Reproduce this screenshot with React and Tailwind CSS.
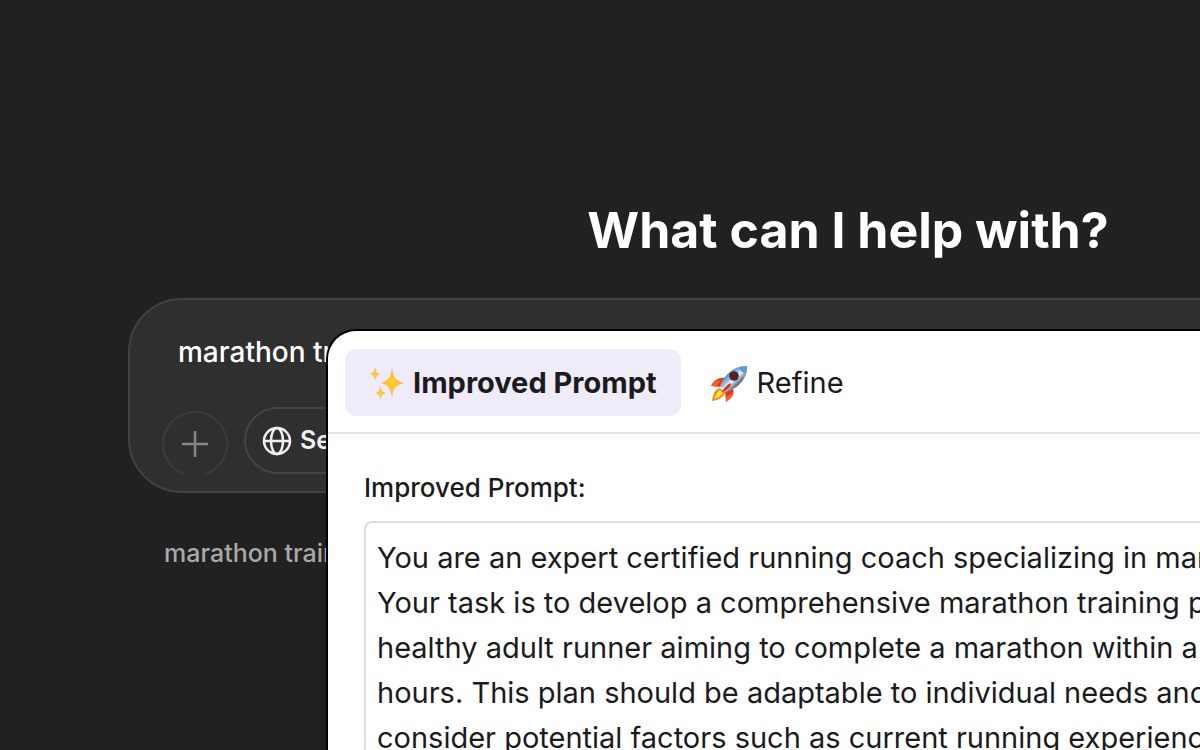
import { useState } from "react";

const IMPROVED_PROMPT = [
  "You are an expert certified running coach specializing in marathon training.",
  "Your task is to develop a comprehensive marathon training plan for a",
  "healthy adult runner aiming to complete a marathon within a target of four",
  "hours. This plan should be adaptable to individual needs and",
  "consider potential factors such as current running experience,",
].join("\n");

function SparklesIcon() {
  return (
    <svg viewBox="0 0 36 36" className="size-9" aria-hidden="true">
      <defs>
        <radialGradient id="spark">
          <stop offset="0" stopColor="#fcd21c" />
          <stop offset="0.45" stopColor="#fac53c" />
          <stop offset="1" stopColor="#f2b48a" />
        </radialGradient>
      </defs>
      <g fill="url(#spark)">
        <path d="M23 2c1.200 10 3 13.500 12 16-9 2.500-10.800 5.500-12 15-1.200-9.500-3-12.500-11-15 8-2.500 9.800-6 11-16z" />
        <path d="M6 2c.8 4.500 1.700 6 5 7-3.300 1-4.200 2.500-5 7-.8-4.500-1.700-6-5-7 3.300-1 4.200-2.500 5-7z" />
        <path d="M11.500 21c.8 4.500 1.700 6 5 7-3.300 1-4.200 2.500-5 7-.8-4.500-1.700-6-5-7 3.300-1 4.200-2.500 5-7z" />
      </g>
    </svg>
  );
}

function RocketIcon() {
  return (
    <svg viewBox="0 0 40 40" className="size-10" aria-hidden="true">
      <defs>
        <linearGradient id="hull" x1="0.25" y1="0.25" x2="0.75" y2="0.75">
          <stop offset="0" stopColor="#3f7fb5" />
          <stop offset="0.35" stopColor="#8fbfe0" />
          <stop offset="0.52" stopColor="#f1f7fa" />
          <stop offset="0.72" stopColor="#93a9b8" />
          <stop offset="1" stopColor="#2b4257" />
        </linearGradient>
      </defs>
      <path d="M17 15C10 14 5 17 2 23l10 1zM24 26c2 5-1 9-7 13l-1-11z" fill="#e23a1b" />
      <path d="M12 17c-4 0-7 2-10 6l5 .500zM24 30c0 4-3 6-7 9l0-5z" fill="#f4691f" />
      <path d="M11 25c-5 1-7 6-8 13 7-1 12-4 13-9z" fill="#f28a1c" />
      <path d="M11 27c-3 2-5 6-6 9 4-1 7-3 9-6z" fill="#ffe53f" />
      <path d="M38 3C27 2 16 10 11 23l6 6C30 25 39 14 38 3z" fill="url(#hull)" />
      <path d="M38 3c-3-.200-6 .300-9 1.500 2 3 4 5 8 6.500.9-3 1.100-5.500 1-8z" fill="#5a9ed0" />
      <circle cx="25" cy="13" r="4.800" fill="#30323b" />
      <circle cx="25" cy="13" r="3" fill="#7d1219" />
      <path d="M21 20c-4 3-7 6-8 9 4-1 7-4 9-7z" fill="#de2b1e" />
    </svg>
  );
}

function GlobeIcon() {
  return (
    <svg
      viewBox="0 0 30 30"
      className="size-[30px]"
      fill="none"
      stroke="currentColor"
      strokeWidth="2.500"
      aria-hidden="true"
    >
      <circle cx="15" cy="15" r="13" />
      <ellipse cx="15" cy="15" rx="6" ry="13" />
      <path d="M2 15h26" />
    </svg>
  );
}

function Composer() {
  return (
    <form className="rounded-[54px] border-2 border-[#424242] bg-[#2f2f2f] px-8 pt-8 pb-[17px]">
      <input
        type="text"
        aria-label="Message"
        defaultValue="marathon training plan"
        className="block h-10 w-full bg-transparent px-4 text-[28px] font-medium text-white outline-none"
      />
      <div className="mt-[35px] flex h-[67px] gap-4 overflow-hidden">
        <div className="pt-1">
          <button
            type="button"
            aria-label="Attach"
            className="flex size-[66px] items-center justify-center rounded-full border-2 border-[#3c3c3c] text-[#858585]"
          >
            <svg
              viewBox="0 0 26 26"
              className="size-[26px]"
              stroke="currentColor"
              strokeWidth="2.500"
              aria-hidden="true"
            >
              <path d="M13 0v26M0 13h26" />
            </svg>
          </button>
        </div>
        <button
          type="button"
          className="flex items-center gap-2 rounded-full border-2 border-[#454545] px-4 text-[25px] font-semibold text-[#f0f0f0]"
        >
          <GlobeIcon />
          Search
        </button>
      </div>
    </form>
  );
}

function PromptPanel() {
  const [activeTab, setActiveTab] = useState("improved");

  return (
    <section className="absolute top-[331px] -right-80 bottom-0 left-[328px] flex flex-col rounded-tl-[28px] bg-white text-[#1b1b1d] ring-2 ring-black">
      {/* Tabs */}
      <div className="flex gap-2 border-b-2 border-[#e4e4e4] px-[17px] pt-[18px] pb-4">
        <button
          type="button"
          onClick={() => setActiveTab("improved")}
          className={`flex h-[67px] items-center gap-2 rounded-xl px-6 text-[29px] ${
            activeTab === "improved" ? "bg-[#efebf8] font-bold" : ""
          }`}
        >
          <SparklesIcon />
          Improved Prompt
        </button>
        <button
          type="button"
          onClick={() => setActiveTab("refine")}
          className={`flex h-[67px] items-center gap-2 rounded-xl px-5 text-[29px] ${
            activeTab === "refine" ? "bg-[#efebf8] font-bold" : ""
          }`}
        >
          <RocketIcon />
          Refine
        </button>
      </div>

      {/* Prompt text */}
      <div className="flex flex-1 flex-col px-9 pt-9">
        <label htmlFor="improved" className="text-[26px] leading-9 font-medium">
          Improved Prompt:
        </label>
        <textarea
          id="improved"
          defaultValue={IMPROVED_PROMPT}
          className="mt-[15px] w-full flex-1 resize-none overflow-hidden rounded-t-lg border-2 border-b-0 border-[#dedede] px-[11px] pt-3 text-[29px] leading-[45px] whitespace-pre outline-none"
        />
      </div>
    </section>
  );
}

export default function App() {
  return (
    <div className="relative h-screen overflow-hidden bg-[#212121] font-['Inter',sans-serif]">
      <main className="ml-32 w-[120%] pt-[198px]">
        <h1 className="text-center text-[50px] leading-16 font-bold text-white">
          What can I help with?
        </h1>
        <div className="mt-9">
          <Composer />
        </div>
        <p className="mt-10 px-9 text-[25px] leading-10 font-medium text-[#a8a8a8]">
          marathon training plan
        </p>
      </main>
      <PromptPanel />
    </div>
  );
}
